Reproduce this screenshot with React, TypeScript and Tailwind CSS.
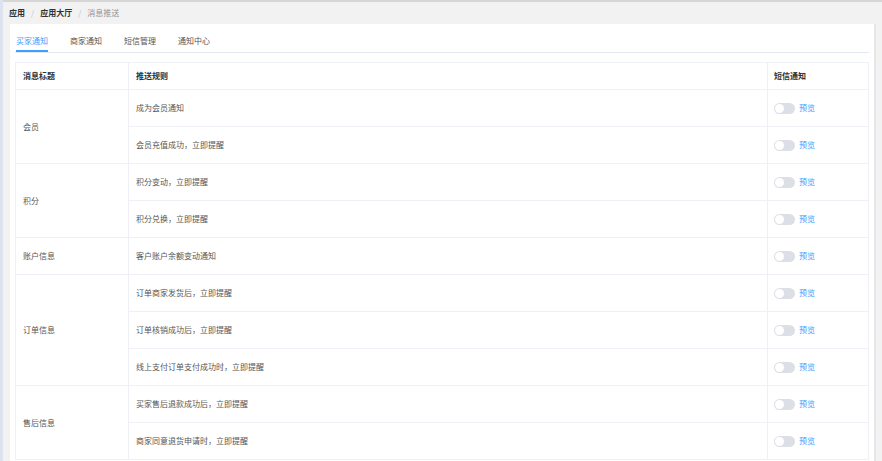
type Row = { rule: string };
type Group = { title: string; rows: Row[] };

const groups: Group[] = [
  { title: "会员", rows: [{ rule: "成为会员通知" }, { rule: "会员充值成功，立即提醒" }] },
  { title: "积分", rows: [{ rule: "积分变动，立即提醒" }, { rule: "积分兑换，立即提醒" }] },
  { title: "账户信息", rows: [{ rule: "客户账户余额变动通知" }] },
  {
    title: "订单信息",
    rows: [
      { rule: "订单商家发货后，立即提醒" },
      { rule: "订单核销成功后，立即提醒" },
      { rule: "线上支付订单支付成功时，立即提醒" },
    ],
  },
  {
    title: "售后信息",
    rows: [{ rule: "买家售后退款成功后，立即提醒" }, { rule: "商家同意退货申请时，立即提醒" }],
  },
];

const tabs = ["买家通知", "商家通知", "短信管理", "通知中心"];

function Toggle() {
  return (
    <div className="relative w-[21px] h-[11px] rounded-full bg-[#dcdfe6]">
      <div className="absolute left-[1px] top-[1px] w-[9px] h-[9px] rounded-full bg-white" />
    </div>
  );
}

export default function App() {
  return (
    <div
      className="w-[882px] h-[461px] overflow-hidden flex bg-[#f2f2f2] text-[8px]"
      style={{ fontFamily: '"Noto Sans CJK SC", "Noto Sans", sans-serif' }}
    >
      {/* left nav edge */}
      <div className="w-[3px] shrink-0 bg-[#dde4ef]" />

      <div className="flex-1 flex flex-col border-t-2 border-[#d6d6d6]">
        {/* Breadcrumb */}
        <div className="h-[22px] shrink-0 flex items-center pl-[6px] leading-[10px]">
          <span className="font-bold text-[#303133]">应用</span>
          <span className="mx-[6px] text-[#c0c4cc]">/</span>
          <span className="font-bold text-[#303133]">应用大厅</span>
          <span className="mx-[6px] text-[#c0c4cc]">/</span>
          <span className="text-[#909399]">消息推送</span>
        </div>

        {/* Card */}
        <div className="flex-1 ml-[7px] mr-[6px] bg-white border-r-2 border-[#e6e6e6] px-[5px] overflow-hidden">
          {/* Tabs */}
          <div className="flex gap-[22px] pl-[1px] border-b border-[#e4e7ed]">
            {tabs.map((t, i) => (
              <div
                key={t}
                className={
                  i === 0
                    ? "pt-[12px] pb-[4px] leading-[10px] border-b-2 border-[#409eff] text-[#409eff]"
                    : "pt-[12px] pb-[4px] leading-[10px] border-b-2 border-transparent text-[#555]"
                }
              >
                {t}
              </div>
            ))}
          </div>

          {/* Table */}
          <table className="mt-[9px] w-[854px] border-collapse table-fixed leading-[10px]">
            <colgroup>
              <col className="w-[113px]" />
              <col />
              <col className="w-[101px]" />
            </colgroup>
            <thead>
              <tr className="h-[27px]">
                <th className="border border-[#eef0f5] pl-[7px] text-left font-semibold text-[#303133]">消息标题</th>
                <th className="border border-[#eef0f5] pl-[7px] text-left font-semibold text-[#303133]">推送规则</th>
                <th className="border border-[#eef0f5] pl-[6px] text-left font-semibold text-[#303133]">短信通知</th>
              </tr>
            </thead>
            <tbody>
              {groups.map((g) =>
                g.rows.map((r, i) => (
                  <tr key={r.rule} className="h-[37px]">
                    {i === 0 && (
                      <td rowSpan={g.rows.length} className="border border-[#eef0f5] pl-[7px] text-[#555]">
                        {g.title}
                      </td>
                    )}
                    <td className="border border-[#eef0f5] pl-[7px] text-[#555]">{r.rule}</td>
                    <td className="border border-[#eef0f5] pl-[6px]">
                      <div className="flex items-center gap-[4px]">
                        <Toggle />
                        <span className="text-[#409eff]">预览</span>
                      </div>
                    </td>
                  </tr>
                ))
              )}
            </tbody>
          </table>
        </div>
      </div>
    </div>
  );
}
